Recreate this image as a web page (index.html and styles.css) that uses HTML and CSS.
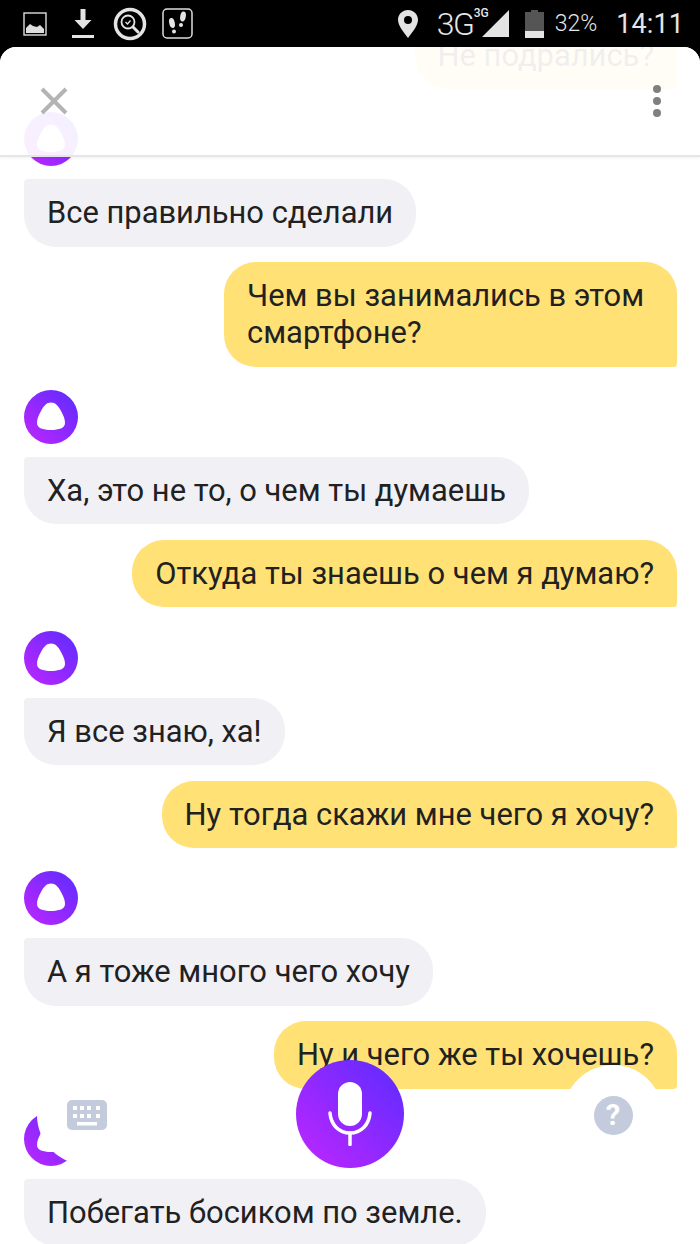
FILE: index.html
```html
<!DOCTYPE html>
<html lang="ru">

<head>
    <meta charset="UTF-8">
    <meta name="viewport" content="width=device-width, initial-scale=1.0">
    <title>Алиса</title>
    <link rel="stylesheet" href="styles.css">
</head>

<body>
    <div class="status-bar">
        <div class="status-left">
            <svg class="icon-picture" width="24" height="24" viewBox="0 0 24 24">
                <rect x="1" y="1" width="22" height="22" fill="none" stroke="#ddd" stroke-width="1.4" />
                <path d="M3 21v-5l4-4 3 2 4 1 3-2 4 4v4z" fill="#ddd" />
            </svg>
            <svg class="icon-download" width="24" height="30" viewBox="0 0 24 30">
                <path d="M9.500 0h5v11h6l-8.500 9-8.500-9h6z" fill="#e4e4e4" />
                <rect x="1" y="26" width="22" height="3" fill="#e4e4e4" />
            </svg>
            <svg class="icon-search" width="34" height="34" viewBox="0 0 34 34">
                <circle cx="17" cy="17" r="14.500" fill="none" stroke="#e4e4e4" stroke-width="3.500" />
                <circle cx="15" cy="15" r="6.500" fill="none" stroke="#e4e4e4" stroke-width="1.800" />
                <path d="M20 20l5 5" stroke="#e4e4e4" stroke-width="3" stroke-linecap="round" />
                <path d="M12.500 15l2 2 3-3.500" fill="none" stroke="#e4e4e4" stroke-width="1.300" />
            </svg>
            <svg class="icon-steps" width="31" height="31" viewBox="0 0 31 31">
                <rect x="1" y="1" width="29" height="29" rx="4" fill="none" stroke="#ddd" stroke-width="1.500" />
                <ellipse cx="10" cy="15" rx="2.800" ry="5" fill="#e4e4e4" transform="rotate(-12 10 15)" />
                <ellipse cx="12" cy="23.500" rx="2" ry="1.900" fill="#e4e4e4" />
                <ellipse cx="21" cy="8.500" rx="2.800" ry="5" fill="#e4e4e4" transform="rotate(10 21 8.500)" />
                <ellipse cx="19" cy="17" rx="2" ry="1.900" fill="#e4e4e4" />
            </svg>
        </div>
        <div class="status-right">
            <svg class="icon-pin" width="20" height="28" viewBox="0 0 20 28">
                <path fill-rule="evenodd" d="M10 0c5.500 0 10 4.300 10 9.800C20 16 13 24 10 28 7 24 0 16 0 9.800 0 4.300 4.500 0 10 0zm0 6a4 4 0 100 8 4 4 0 000-8z" fill="#e4e4e4" />
            </svg>
            <span class="net">3G<sup>3G</sup></span>
            <svg class="icon-signal" width="27" height="27" viewBox="0 0 27 27">
                <path d="M27 0v27H0z" fill="#e4e4e4" />
            </svg>
            <svg class="icon-battery" width="19" height="28" viewBox="0 0 19 28">
                <path d="M6 0h7v2h6v19H0V2h6z" fill="#555" />
                <rect y="21" width="19" height="7" fill="#e4e4e4" />
            </svg>
            <span class="percent">32%</span>
            <span class="clock">14:11</span>
        </div>
    </div>

    <div class="sheet">
        <div class="chat">
            <div class="bubble user">Не подрались?</div>

            <div class="avatar"><svg width="54" height="54" viewBox="0 0 54 54"><path d="M27 12.500C31.500 12.500 34 15.500 37 21 39.500 25.500 41 29 41 33 41 38 35 40 27 40 19 40 13 38 13 33 13 29 14.500 25.500 17 21 20 15.500 22.500 12.500 27 12.500z" fill="#fff" /></svg></div>
            <div class="bubble alice">Все правильно сделали</div>
            <div class="bubble user wide">Чем вы занимались в этом смартфоне?</div>

            <div class="avatar"><svg width="54" height="54" viewBox="0 0 54 54"><path d="M27 12.500C31.500 12.500 34 15.500 37 21 39.500 25.500 41 29 41 33 41 38 35 40 27 40 19 40 13 38 13 33 13 29 14.500 25.500 17 21 20 15.500 22.500 12.500 27 12.500z" fill="#fff" /></svg></div>
            <div class="bubble alice">Ха, это не то, о чем ты думаешь</div>
            <div class="bubble user">Откуда ты знаешь о чем я думаю?</div>

            <div class="avatar"><svg width="54" height="54" viewBox="0 0 54 54"><path d="M27 12.500C31.500 12.500 34 15.500 37 21 39.500 25.500 41 29 41 33 41 38 35 40 27 40 19 40 13 38 13 33 13 29 14.500 25.500 17 21 20 15.500 22.500 12.500 27 12.500z" fill="#fff" /></svg></div>
            <div class="bubble alice">Я все знаю, ха!</div>
            <div class="bubble user">Ну тогда скажи мне чего я хочу?</div>

            <div class="avatar"><svg width="54" height="54" viewBox="0 0 54 54"><path d="M27 12.500C31.500 12.500 34 15.500 37 21 39.500 25.500 41 29 41 33 41 38 35 40 27 40 19 40 13 38 13 33 13 29 14.500 25.500 17 21 20 15.500 22.500 12.500 27 12.500z" fill="#fff" /></svg></div>
            <div class="bubble alice">А я тоже много чего хочу</div>
            <div class="bubble user">Ну и чего же ты хочешь?</div>

            <div class="avatar"><svg width="54" height="54" viewBox="0 0 54 54"><path d="M27 12.500C31.500 12.500 34 15.500 37 21 39.500 25.500 41 29 41 33 41 38 35 40 27 40 19 40 13 38 13 33 13 29 14.500 25.500 17 21 20 15.500 22.500 12.500 27 12.500z" fill="#fff" /></svg></div>
            <div class="bubble alice">Побегать босиком по земле.</div>
        </div>

        <div class="header">
            <svg class="close" width="30" height="30" viewBox="0 0 30 30">
                <path d="M3 3l24 24M27 3L3 27" stroke="#b4b4b4" stroke-width="4" />
            </svg>
            <div class="more"><span></span><span></span><span></span></div>
        </div>

        <div class="round-btn keyboard">
            <svg width="40" height="30" viewBox="0 0 40 30">
                <rect width="40" height="30" rx="5" fill="#c3cbdc" />
                <g fill="#fff">
                    <rect x="6" y="6" width="4" height="4" />
                    <rect x="13" y="6" width="4" height="4" />
                    <rect x="20" y="6" width="4" height="4" />
                    <rect x="29" y="6" width="4" height="4" />
                    <rect x="6" y="14" width="4" height="4" />
                    <rect x="13" y="14" width="4" height="4" />
                    <rect x="20" y="14" width="4" height="4" />
                    <rect x="29" y="14" width="4" height="4" />
                    <rect x="10" y="22" width="20" height="3.500" />
                </g>
            </svg>
        </div>
        <div class="mic-btn">
            <svg width="44" height="64" viewBox="0 0 44 64">
                <rect x="10" y="0" width="24" height="44" rx="12" fill="#fff" />
                <path d="M2 31c1 12 9 20 20 20s19-8 20-20" fill="none" stroke="#fff" stroke-width="3.500" stroke-linecap="round" />
                <path d="M22 51v11.500" stroke="#fff" stroke-width="3.500" stroke-linecap="round" />
            </svg>
        </div>
        <div class="round-btn help"><span class="help-icon">?</span></div>
    </div>
</body>

</html>
```

FILE: styles.css
```css
html,
body {
    margin: 0;
    height: 1244px;
    overflow: hidden;
}

body {
    position: relative;
    width: 700px;
    font-family: Roboto, "Noto Sans", sans-serif;
    background-color: #000;
}

.status-bar {
    display: flex;
    justify-content: space-between;
    align-items: center;
    height: 47px;
    color: #e6e6e6;
}

.status-left {
    display: flex;
    align-items: center;
    margin-left: 23px;
}

.icon-download {
    margin-left: 24px;
}

.icon-search {
    margin-left: 18px;
}

.icon-steps {
    margin-left: 15px;
}

.status-right {
    display: flex;
    align-items: center;
    margin-right: 16px;
}

.net {
    position: relative;
    margin-left: 19px;
    width: 53px;
    font-size: 32px;
    font-weight: 300;
    letter-spacing: -1.5px;
}

.net sup {
    position: absolute;
    top: 1px;
    left: 37px;
    font-size: 12px;
    font-weight: 500;
    letter-spacing: 0;
    line-height: 14px;
}

.icon-signal {
    margin-left: -8px;
}

.icon-battery {
    margin-left: 16px;
}

.percent {
    margin-left: 11px;
    font-size: 23px;
    font-weight: 300;
}

.clock {
    margin-left: 19px;
    font-size: 27px;
    letter-spacing: 0.1px;
}

.sheet {
    position: relative;
    height: 1197px;
    overflow: hidden;
    background-color: #fff;
    border-radius: 16px 16px 0 0;
}

.chat {
    display: flex;
    flex-direction: column;
    margin-top: -41px;
    padding: 0 23px 0 24px;
}

.bubble {
    box-sizing: border-box;
    flex: none;
    padding: 15px 23px;
    font-size: 30.9px;
    line-height: 37.3px;
    color: #212121;
    border-radius: 32px;
}

.alice {
    align-self: flex-start;
    margin-top: 13px;
    background-color: #f0f0f5;
    border-top-left-radius: 4px;
}

.user {
    align-self: flex-end;
    margin-top: 15.6px;
    background-color: #ffe176;
    border-bottom-right-radius: 4px;
}

.wide {
    width: 453px;
}

.avatar {
    flex: none;
    width: 54px;
    height: 54px;
    margin-top: 23.4px;
    border-radius: 50%;
    background: linear-gradient(45deg, #c126ff, #5a2cff);
}

.avatar svg {
    display: block;
}

.header {
    position: absolute;
    top: 0;
    left: 0;
    right: 0;
    height: 108px;
    background-color: rgba(255, 255, 255, 0.93);
    border-bottom: 2px solid #e6e6e6;
    box-shadow: 0 1px 3px rgba(0, 0, 0, 0.06);
}

.close {
    position: absolute;
    top: 39px;
    left: 39px;
}

.more {
    position: absolute;
    top: 38px;
    left: 653px;
    display: flex;
    flex-direction: column;
    gap: 4px;
}

.more span {
    width: 8px;
    height: 8px;
    border-radius: 50%;
    background-color: #808080;
}

.round-btn {
    position: absolute;
    top: 1018px;
    display: flex;
    justify-content: center;
    align-items: center;
    width: 100px;
    height: 100px;
    border-radius: 50%;
    background-color: #fff;
}

.keyboard {
    left: 37px;
}

.help {
    left: 563px;
}

.help-icon {
    width: 39px;
    height: 39px;
    border-radius: 50%;
    background-color: #c3cbdc;
    color: #fff;
    font-size: 29px;
    font-weight: 700;
    line-height: 39px;
    text-align: center;
}

.mic-btn {
    position: absolute;
    top: 1013px;
    left: 296px;
    display: flex;
    justify-content: center;
    align-items: center;
    width: 108px;
    height: 108px;
    border-radius: 50%;
    background: linear-gradient(45deg, #c126ff, #5a2cff);
}
```
